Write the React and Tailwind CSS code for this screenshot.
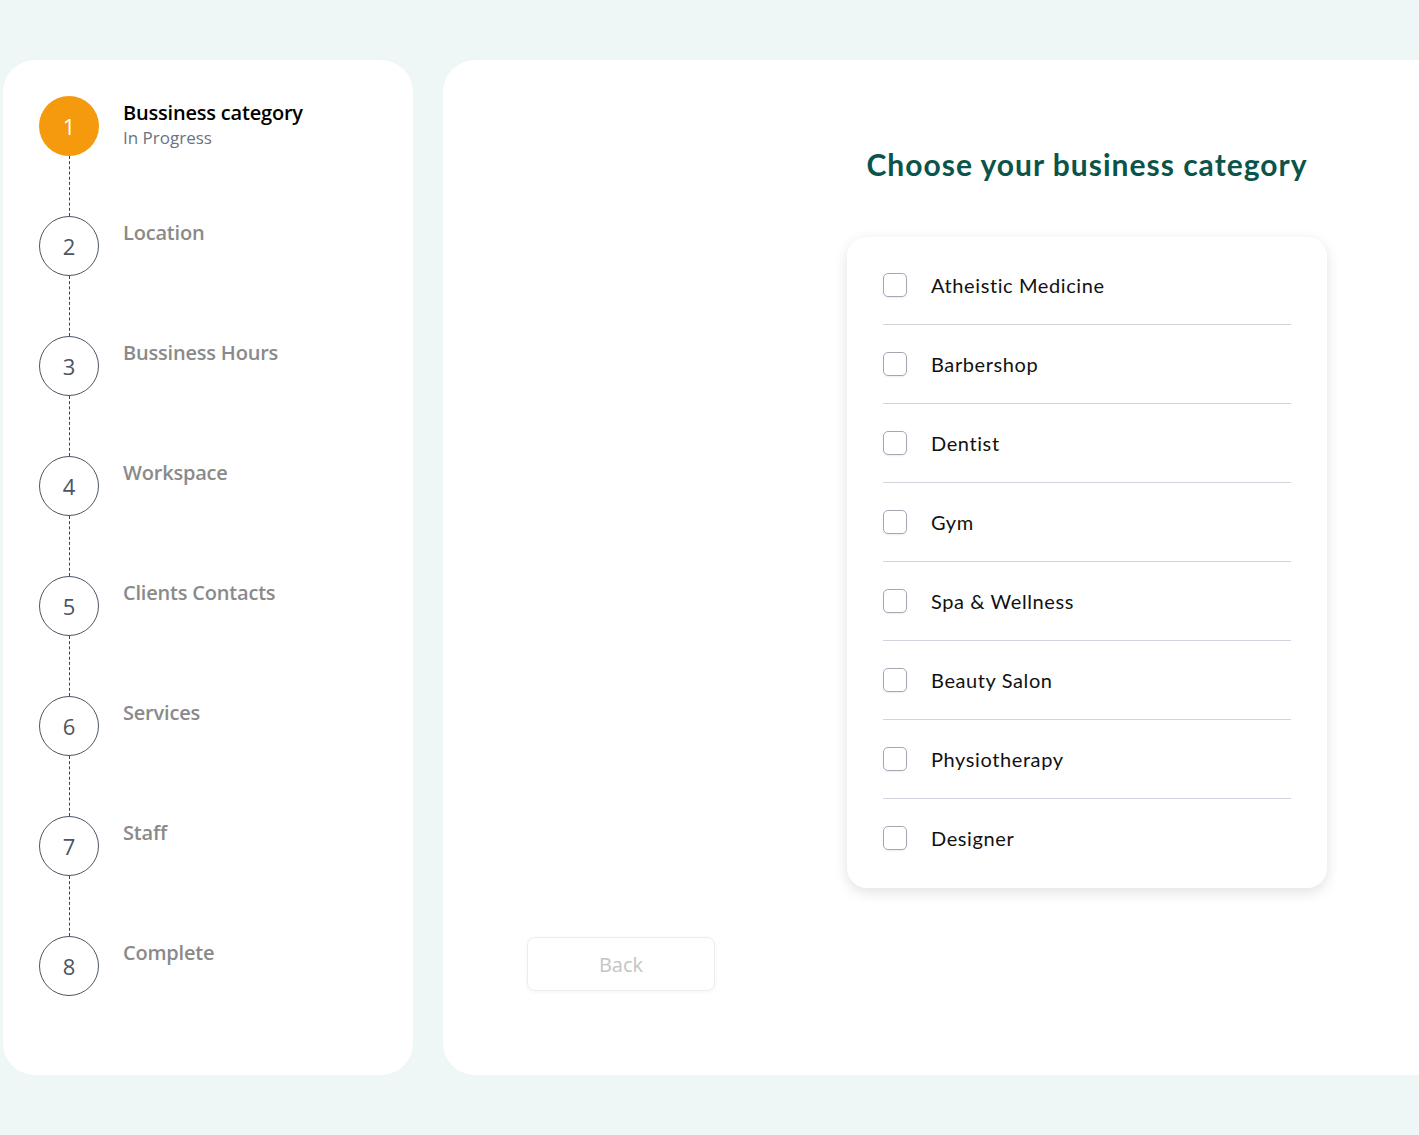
import React from 'react';

const steps = [
  'Bussiness category',
  'Location',
  'Bussiness Hours',
  'Workspace',
  'Clients Contacts',
  'Services',
  'Staff',
  'Complete',
];

const categories = [
  'Atheistic Medicine',
  'Barbershop',
  'Dentist',
  'Gym',
  'Spa & Wellness',
  'Beauty Salon',
  'Physiotherapy',
  'Designer',
];

const Step = ({ index, label, last }) => {
  const active = index === 0;
  return (
    <div className="flex">
      <div className="flex flex-col items-center w-[60px]">
        <div
          className={
            active
              ? 'w-[60px] h-[60px] rounded-full bg-[#f59a0c] text-white flex items-center justify-center text-[22px]'
              : 'w-[60px] h-[60px] rounded-full border border-[#4b5563] text-[#4b5563] flex items-center justify-center text-[22px]'
          }
        >
          {index + 1}
        </div>
        {!last && <div className="h-[60px] border-l border-dashed border-[#374151]" />}
      </div>
      <div className="ml-6 pt-[3px]">
        <p
          className={
            active
              ? 'text-[20px] leading-7 font-semibold text-black tracking-[-0.2px]'
              : 'text-[20px] leading-7 font-semibold text-[#8a8a8a] tracking-[-0.2px]'
          }
        >
          {label}
        </p>
        {active && <p className="mt-[1px] text-[17px] leading-5 text-[#6b7280]">In Progress</p>}
      </div>
    </div>
  );
};

export default function App() {
  return (
    <div className="min-h-[1135px] bg-[#eef7f5] overflow-hidden font-['Open_Sans',sans-serif]">
      <div className="flex gap-[30px] pt-[60px] pl-[3px] pb-[60px] mr-[-40px]">
        {/* Steps sidebar */}
        <aside className="w-[410px] h-[1015px] shrink-0 bg-white rounded-[32px] pt-9 pl-9">
          {steps.map((s, i) => (
            <Step key={s} index={i} label={s} last={i === steps.length - 1} />
          ))}
        </aside>

        {/* Main panel */}
        <main className="flex-1 h-[1015px] bg-white rounded-[32px] font-['Lato',sans-serif]">
          <div className="pl-[404px] pt-[86px]">
            <div className="w-[480px]">
              <h1 className="text-center text-[30px] leading-9 font-bold text-[#0a544a] tracking-[1px]">
                Choose your business category
              </h1>
              <div className="mt-[55px] bg-white rounded-[20px] shadow-[0_4px_14px_rgba(0,0,0,0.12)] px-9 pt-[9px] pb-[11px]">
                {categories.map((c, i) => (
                  <label
                    key={c}
                    className={
                      i === categories.length - 1
                        ? 'flex items-center h-[78px] cursor-pointer'
                        : 'flex items-center h-[79px] border-b border-[#cfd4dc] cursor-pointer'
                    }
                  >
                    <span className="w-6 h-6 rounded-[5px] border border-[#a3a8b4] shadow-[0_1px_2px_rgba(0,0,0,0.08)] shrink-0" />
                    <span className="ml-6 text-[20px] text-[#111111] tracking-[0.6px]">{c}</span>
                  </label>
                ))}
              </div>
            </div>
          </div>
          <div className="pl-[84px] mt-[49px]">
            <button className="w-[188px] h-[54px] pt-[2px] rounded-lg border border-[#ececec] shadow-[0_1px_4px_rgba(0,0,0,0.05)] text-[20px] text-[#c4c4c4] font-['Open_Sans',sans-serif]">
              Back
            </button>
          </div>
        </main>
      </div>
    </div>
  );
}
